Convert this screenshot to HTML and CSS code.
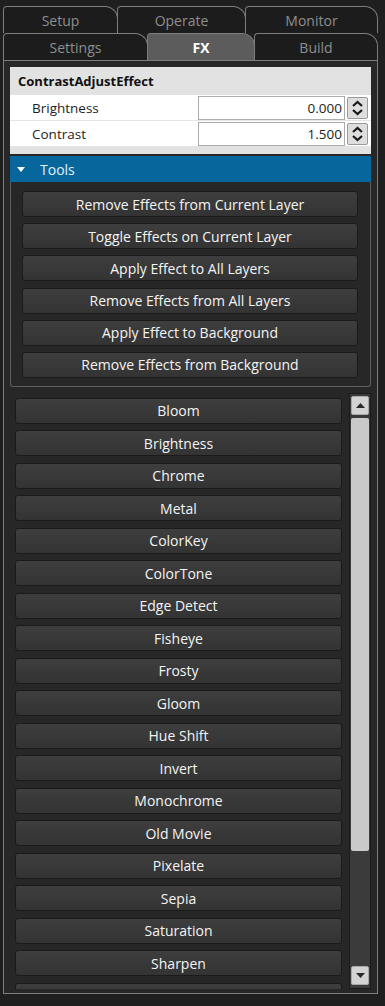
FILE: index.html
```html
<!DOCTYPE html>
<html>
<head>
<meta charset="utf-8">
<link rel="stylesheet" href="styles.css">
</head>
<body>
<div class="app">
  <div class="tabrow row1">
    <div class="tab w-setup">Setup</div>
    <div class="tab w-operate">Operate</div>
    <div class="tab w-monitor">Monitor</div>
  </div>
  <div class="tabrow row2">
    <div class="tab w-settings">Settings</div>
    <div class="tab active w-fx">FX</div>
    <div class="tab w-build">Build</div>
  </div>
  <div class="content">
    <div class="props">
      <div class="props-head">ContrastAdjustEffect</div>
      <div class="prop-row">
        <div class="prop-label">Brightness</div>
        <div class="num">0.000</div>
        <div class="spin"><svg width="19" height="22" viewBox="0 0 19 22"><path d="M5 9 L9.5 5 L14 9" fill="none" stroke="#1a1a1a" stroke-width="2.2"/><path d="M5 13 L9.5 17 L14 13" fill="none" stroke="#1a1a1a" stroke-width="2.2"/></svg></div>
      </div>
      <div class="prop-row">
        <div class="prop-label">Contrast</div>
        <div class="num">1.500</div>
        <div class="spin"><svg width="19" height="22" viewBox="0 0 19 22"><path d="M5 9 L9.5 5 L14 9" fill="none" stroke="#1a1a1a" stroke-width="2.2"/><path d="M5 13 L9.5 17 L14 13" fill="none" stroke="#1a1a1a" stroke-width="2.2"/></svg></div>
      </div>
      <div class="props-foot"></div>
    </div>
    <div class="tools-head">
      <svg class="tri" width="8" height="5" viewBox="0 0 8 5"><path d="M0 0 L8 0 L4 5 Z" fill="#ffffff"/></svg>
      <span>Tools</span>
    </div>
    <div class="tools-box">
      <div class="btn">Remove Effects from Current Layer</div>
      <div class="btn">Toggle Effects on Current Layer</div>
      <div class="btn">Apply Effect to All Layers</div>
      <div class="btn">Remove Effects from All Layers</div>
      <div class="btn">Apply Effect to Background</div>
      <div class="btn">Remove Effects from Background</div>
    </div>
    <div class="list-area">
      <div class="viewport">
        <div class="list">
          <div class="btn lb">Bloom</div>
          <div class="btn lb">Brightness</div>
          <div class="btn lb">Chrome</div>
          <div class="btn lb">Metal</div>
          <div class="btn lb">ColorKey</div>
          <div class="btn lb">ColorTone</div>
          <div class="btn lb">Edge Detect</div>
          <div class="btn lb">Fisheye</div>
          <div class="btn lb">Frosty</div>
          <div class="btn lb">Gloom</div>
          <div class="btn lb">Hue Shift</div>
          <div class="btn lb">Invert</div>
          <div class="btn lb">Monochrome</div>
          <div class="btn lb">Old Movie</div>
          <div class="btn lb">Pixelate</div>
          <div class="btn lb">Sepia</div>
          <div class="btn lb">Saturation</div>
          <div class="btn lb">Sharpen</div>
          <div class="btn lb"></div>
        </div>
      </div>
      <div class="scrollbar">
        <div class="sb-btn"><svg width="9" height="5" viewBox="0 0 9 5"><path d="M0 5 L9 5 L4.5 0 Z" fill="#2a2a2a"/></svg></div>
        <div class="thumb"></div>
        <div class="track"></div>
        <div class="sb-btn"><svg width="9" height="5" viewBox="0 0 9 5"><path d="M0 0 L9 0 L4.5 5 Z" fill="#2a2a2a"/></svg></div>
      </div>
    </div>
  </div>
</div>
</body>
</html>
```
FILE: styles.css
```css
* { box-sizing: border-box; }
html, body { margin: 0; padding: 0; }
body {
  background: #1f1f1f;
  font-family: "Open Sans", "Noto Sans", sans-serif;
  font-size: 13px;
  width: 385px;
  height: 1006px;
  overflow: hidden;
}
.app { padding-left: 3px; }

.tabrow { display: flex; height: 27px; }
.row1 { margin-top: 6px; }
.tab {
  height: 27px;
  border: 1px solid #7d7d7d;
  border-bottom: none;
  border-radius: 4px 13px 0 0;
  color: #8e8e8e;
  font-size: 14px;
  display: flex;
  align-items: center;
  justify-content: center;
  margin-left: -1px;
  background: #1c1c1c;
}
.tab:first-child { margin-left: 0; }
.tab.active {
  background: #5c5c5c;
  color: #ffffff;
  font-weight: 700;
}
.w-setup { width: 115px; }
.w-operate { width: 129px; }
.w-monitor { width: 133px; }
.w-settings { width: 145px; }
.w-fx { width: 108px; }
.w-build { width: 124px; }

.content {
  width: 375px;
  height: 934px;
  border: 1px solid #7d7d7d;
  background: #272727;
  padding: 6px 6px 4px 6px;
  display: flex;
  flex-direction: column;
}

.props { background: #e2e2e2; }
.props-head {
  height: 28px;
  padding-left: 8px;
  display: flex;
  align-items: center;
  font-weight: 700;
  font-size: 13px;
  color: #111;
}
.prop-row {
  display: flex;
  align-items: center;
  height: 26px;
  background: #ffffff;
  border-bottom: 1px solid #e4e4e4;
}
.prop-label {
  width: 188px;
  padding-left: 22px;
  color: #1e1e1e;
  font-size: 13.5px;
}
.num {
  width: 147px;
  height: 24px;
  border: 1px solid #ababab;
  text-align: right;
  padding-right: 2px;
  line-height: 22px;
  color: #222;
  font-size: 13.5px;
  background: #fff;
}
.spin {
  width: 21px;
  height: 22px;
  margin-left: 2px;
  border: 1px solid #9a9a9a;
  border-radius: 2px;
  background: #dedede;
  display: flex;
  align-items: center;
  justify-content: center;
}
.props-foot { height: 7px; }

.tools-head {
  margin-top: 2px;
  height: 26px;
  background: #07669b;
  color: #e2f2ff;
  font-size: 14px;
  display: flex;
  align-items: center;
}
.tools-head .tri { margin-left: 7px; margin-right: 15px; }

.tools-box {
  border: 1px solid #5e5e5e;
  border-top: none;
  border-radius: 0 0 3px 3px;
  padding: 9px 12px 8px 11px;
  display: flex;
  flex-direction: column;
  gap: 6.2px;
}

.btn {
  height: 26px;
  border: 1px solid #1a1a1a;
  border-radius: 3px;
  background: linear-gradient(#3e3e3e, #333333);
  color: #f4f4f4;
  font-size: 14px;
  display: flex;
  align-items: center;
  justify-content: center;
  flex-shrink: 0;
}

.list-area {
  flex: 1;
  margin-top: 6px;
  display: flex;
  min-height: 0;
}
.viewport {
  flex: 1;
  overflow: hidden;
  padding: 5px 7px 0 5px;
}
.list {
  display: flex;
  flex-direction: column;
  gap: 6.5px;
}
.scrollbar {
  width: 22px;
  border: 1px solid #1a1a1a;
  background: #3b3b3b;
  padding: 2px 1px 3px 1px;
  display: flex;
  flex-direction: column;
}
.sb-btn {
  height: 19px;
  background: #d3d3d3;
  border: 1px solid #a8a8a8;
  border-radius: 2px;
  display: flex;
  align-items: center;
  justify-content: center;
}
.thumb {
  height: 433px;
  margin-top: 3px;
  background: #c9c9c9;
  border-radius: 2px;
}
.track { flex: 1; }
```
